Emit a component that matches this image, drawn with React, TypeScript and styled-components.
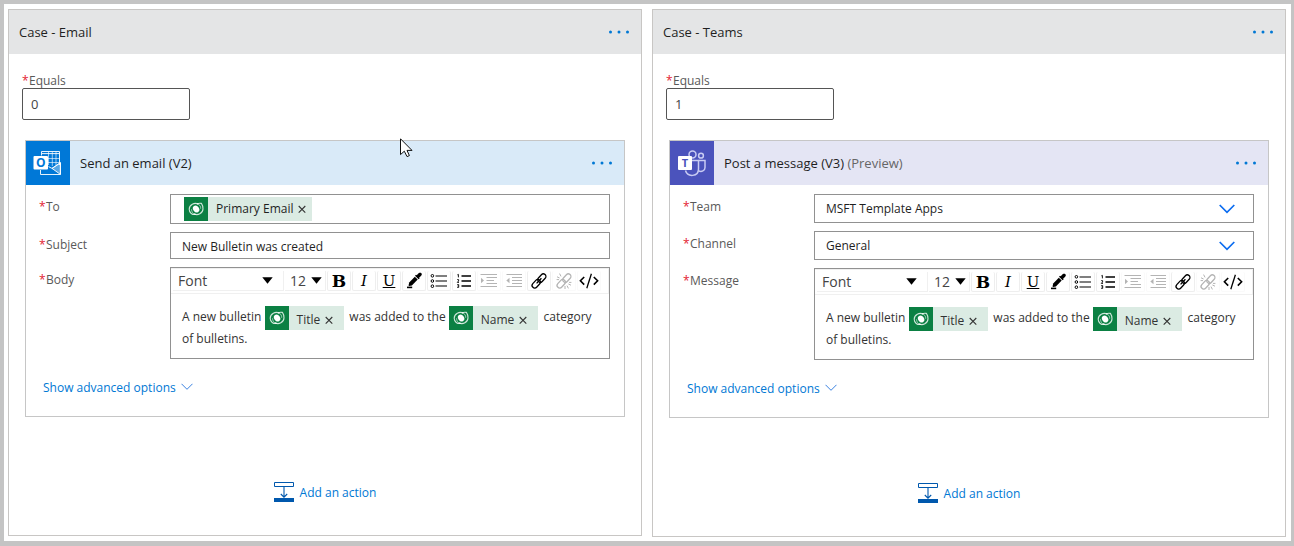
import React from "react";
import styled, { createGlobalStyle } from "styled-components";

const GlobalStyle = createGlobalStyle`
  *, *::before, *::after { box-sizing: border-box; }
  body {
    margin: 0;
    background: #fff;
    color: #1f1f1f;
    font-family: "Segoe UI", "Open Sans", "Noto Sans", sans-serif;
    font-size: 12px;
  }
  button, input, select { font: inherit; color: inherit; margin: 0; }
  svg { display: block; }
`;

const Frame = styled.main`
  position: relative;
  min-height: 100vh;
  border: solid #c4c4c4;
  border-width: 4px 3px 5px 4px;
  padding: 5px 5px 4px 4px;
  display: grid;
  grid-template-columns: 1fr 1fr;
  align-items: start;
  gap: 10px;
`;

const Panel = styled.section`
  border: 1px solid #c8c6c4;
  min-width: 0;
`;

const PanelHeader = styled.header`
  height: 44px;
  padding: 0 11px 0 10px;
  display: flex;
  align-items: center;
  justify-content: space-between;
  background: #e4e5e6;
`;

const Heading = styled.h2`
  margin: 0;
  font-size: 13px;
  font-weight: 400;
  line-height: 20px;
`;

const MoreButton = styled.button`
  border: 0;
  padding: 0;
  background: none;
  cursor: pointer;
`;

const PanelBody = styled.div`
  padding: 18px 16px 33px;
  display: flex;
  flex-direction: column;
`;

const EqualsField = styled.div`
  margin: 0 0 20px -3px;
  display: flex;
  flex-direction: column;
  align-items: flex-start;
`;

const EqualsInput = styled.input`
  width: 168px;
  height: 32px;
  padding: 0 8px;
  border: 1px solid #555;
  border-radius: 2px;
  background: #fff;
  color: #444;
  font-size: 13px;
`;

const Label = styled.label`
  display: flex;
  gap: 2px;
  height: 16px;
  line-height: 18px;
  color: #595959;
`;

const Star = styled.span`
  width: 5px;
  color: #e3202f;
`;

const Card = styled.article`
  border: 1px solid #c6c6c6;
`;

const CardHeader = styled.header<{ $tint: string }>`
  height: 44px;
  padding-right: 11px;
  display: flex;
  align-items: center;
  gap: 10px;
  background: ${(p) => p.$tint};

  ${MoreButton} { margin-left: auto; }
`;

const Preview = styled.span`
  color: #666;
`;

const CardBody = styled.div`
  padding: 9px 14px 19px 13px;
  display: flex;
  flex-direction: column;
  gap: 8px;
`;

const FieldRow = styled.div`
  display: grid;
  grid-template-columns: 131px minmax(0, 1fr);
  align-items: start;

  ${Label} { margin-top: 4px; }
`;

const TokenBox = styled.div`
  height: 30px;
  padding: 0 13px;
  display: flex;
  align-items: center;
  border: 1px solid #919191;
`;

const BareInput = styled.input`
  flex: 1;
  min-width: 0;
  border: 0;
  padding: 0;
  background: none;
`;

const TextInput = styled.input`
  width: 100%;
  height: 27px;
  padding: 2px 11px 0;
  border: 1px solid #919191;
  background: #fff;
`;

const SelectWrap = styled.div`
  position: relative;

  svg {
    position: absolute;
    right: 19px;
    top: 10px;
    pointer-events: none;
  }
`;

const Select = styled.select`
  appearance: none;
  width: 100%;
  height: 29px;
  padding: 0 48px 0 11px;
  border: 1px solid #919191;
  border-radius: 0;
  background: #fff;
`;

const Editor = styled.div`
  height: 92px;
  border: 1px solid #919191;
`;

const Toolbar = styled.div`
  height: 26px;
  padding: 2px 0 2px 2px;
  display: flex;
  gap: 1px;
  border: solid #f0f0f0;
  border-width: 1px 1px 1px 0;
`;

const ToolSelectWrap = styled.div<{ $width: number }>`
  position: relative;
  width: ${(p) => p.$width}px;

  svg {
    position: absolute;
    right: 4px;
    top: 6px;
    pointer-events: none;
  }
`;

const ToolSelect = styled.select`
  appearance: none;
  width: 100%;
  height: 20px;
  padding: 0 5px;
  border: solid #f0f0f0;
  border-width: 0 1px 1px 0;
  border-radius: 0;
  background: #fff;
  color: #444;
  font-size: 14px;
  line-height: 18px;
`;

const ToolButton = styled.button<{ $off?: boolean }>`
  width: 24px;
  height: 20px;
  padding: 0;
  display: grid;
  place-items: center;
  border: solid ${(p) => (p.$off ? "#fafafa" : "#eeeeee")};
  border-width: 0 1px 1px 1px;
  border-radius: 2px;
  background: #fff;
  color: ${(p) => (p.$off ? "#b4b4b4" : "#000")};
`;

const Letter = styled.span<{ $kind: "b" | "i" | "u" }>`
  font-family: "DejaVu Serif", serif;
  font-size: ${(p) => (p.$kind === "b" ? 17 : 15)}px;
  line-height: 18px;
  font-weight: ${(p) => (p.$kind === "b" ? 700 : 400)};
  font-style: ${(p) => (p.$kind === "i" ? "italic" : "normal")};
  text-decoration: ${(p) => (p.$kind === "u" ? "underline" : "none")};
`;

const Content = styled.div`
  padding: 12px 11px;
  line-height: 18px;
  color: #333;
  outline: none;
`;

const TokenShell = styled.span<{ $roomy?: boolean }>`
  display: inline-flex;
  align-items: center;
  height: 24px;
  margin-right: ${(p) => (p.$roomy ? 2 : 0)}px;
  padding-right: ${(p) => (p.$roomy ? 11 : 6)}px;
  background: #dbebe3;
  line-height: 24px;
  vertical-align: middle;
`;

const TokenMark = styled.span`
  width: 24px;
  height: 24px;
  margin-right: 8px;
  background: #0b8043;
`;

const TokenText = styled.span<{ $roomy?: boolean }>`
  display: flex;
  align-items: center;
  gap: 5px;
  padding-top: ${(p) => (p.$roomy ? 3 : 0)}px;
`;

const TokenRemove = styled.button`
  padding: 0;
  border: 0;
  background: none;
`;

const AdvancedButton = styled.button`
  align-self: flex-start;
  height: 20px;
  margin: 10px 0 0 4px;
  padding: 0;
  display: flex;
  align-items: center;
  gap: 5px;
  border: 0;
  background: none;
  color: #0078d4;
`;

const AddButton = styled.button`
  align-self: center;
  height: 20px;
  margin-top: 65px;
  padding: 0;
  display: flex;
  align-items: center;
  gap: 6px;
  border: 0;
  background: none;
  color: #0078d4;
`;

const Pointer = styled.svg`
  position: absolute;
  left: 396px;
  top: 134px;
  pointer-events: none;
`;

const More = () => (
  <MoreButton aria-label="More options">
    <svg width="22" height="6" viewBox="0 0 22 6" fill="#0078d4">
      <circle cx="2.5" cy="3" r="1.5" />
      <circle cx="11" cy="3" r="1.5" />
      <circle cx="19.5" cy="3" r="1.5" />
    </svg>
  </MoreButton>
);

const Required = ({ id, text }: { id: string; text: string }) => (
  <Label htmlFor={id} id={id + "-label"}>
    <Star>*</Star>
    {text}
  </Label>
);

const Token = ({ name, roomy }: { name: string; roomy?: boolean }) => (
  <TokenShell contentEditable={false} $roomy={roomy}>
    <TokenMark>
      <svg width="24" height="24" viewBox="0 0 24 24" fill="none" stroke="#fff">
        <ellipse cx="12.1" cy="12" rx="2.9" ry="3.7" transform="rotate(-35 12.1 12)" fill="#fff" stroke="none" />
        <path d="M14.4 7.2C10.4 4.9 5.2 7.8 5.2 12.2C5.2 15.8 8.4 18.2 11.6 17.4" strokeWidth="1.1" strokeOpacity=".8" />
        <path d="M9.8 16.8C13.8 19.1 19 16.2 19 11.8C19 9.6 18.4 7.8 17.4 6.4C16 6 14.4 6.2 13 6.8" strokeWidth="1.1" strokeOpacity=".8" />
        <path d="M11.6 17.4C8.6 16.8 7.4 14.6 7.6 12.2M13 6.8C15.8 7.4 16.9 9.4 16.7 11.8" strokeWidth=".9" strokeOpacity=".6" />
      </svg>
    </TokenMark>
    <TokenText $roomy={roomy}>
      {name}
      <TokenRemove aria-label={"Remove " + name}>
        <svg width="8" height="8" viewBox="0 0 8 8" stroke="#333" strokeWidth="1.1">
          <path d="M.7 1L7.3 7.6M7.3 1L.7 7.6" />
        </svg>
      </TokenRemove>
    </TokenText>
  </TokenShell>
);

const Chevron = () => (
  <svg width="16" height="10" viewBox="0 0 16 10" fill="none" stroke="#0b6cf0" strokeWidth="1.7">
    <path d="M.7 1L8 8.3L15.3 1" />
  </svg>
);

const Triangle = () => (
  <svg width="11" height="7" viewBox="0 0 11 7">
    <path d="M.3 .3H10.7L5.5 6.8Z" />
  </svg>
);

const MarkerIcon = () => (
  <svg width="18" height="18" viewBox="0 0 18 18">
    <path d="M16.4 1.2C15.3 .2 13.8 .8 12.9 1.9L11.7 3.2L11 2.7L10 3.8L13.6 7.3L14.7 6.2L14.2 5.5L15.7 4.2C16.7 3.3 17.3 2 16.4 1.2Z" />
    <path d="M9.8 4.8L12.7 7.6L6.9 13.4L4.2 14.1L3.5 13.4L4.2 10.4Z" />
    <path d="M2 15.4H7.2" stroke="#000" strokeWidth="1.6" />
  </svg>
);

const BulletsIcon = () => (
  <svg width="18" height="16" viewBox="0 0 18 16" fill="none" stroke="#000">
    <circle cx="2.4" cy="2.8" r="1.3" />
    <circle cx="2.4" cy="8" r="1.3" />
    <circle cx="2.4" cy="13.2" r="1.3" />
    <path d="M5.5 3H17M5.5 8H17M5.5 13H17" strokeWidth="1.1" />
  </svg>
);

const NumbersIcon = () => (
  <svg width="16" height="16" viewBox="0 0 16 16" fill="none" stroke="#000">
    <path d="M1.4 1.8L2.4 1.4V4.4M1.2 6.6H2.6V8L1.3 9.4H3M1.2 11.6H2.7V14.4H1.2M1.5 13H2.6" strokeWidth=".9" />
    <path d="M5.5 3H15M5.5 8H15M5.5 13H15" strokeWidth="1.6" />
  </svg>
);

const IndentIcon = ({ back }: { back?: boolean }) => (
  <svg width="18" height="16" viewBox="0 0 18 16" fill="none" stroke="currentColor">
    <path d={back ? "M1.5 1.5H17M7 4.5H17M7 7.5H17M7 10.5H17M1.5 13.5H17" : "M.5 1.5H17M6.5 4.5H17M6.5 7.5H14M6.5 10.5H17M.5 13.5H17"} />
    <path d={back ? "M4.5 4.8V10.2L1.3 7.5Z" : "M1 4.8V10.2L4 7.5Z"} fill="currentColor" stroke="none" />
  </svg>
);

const LinkIcon = ({ broken }: { broken?: boolean }) => (
  <svg width="18" height="18" viewBox="0 0 18 18" fill="none" stroke="currentColor" strokeWidth="1.3">
    <rect x="7" y="3.5" width="9.6" height="5.2" rx="2.6" transform="rotate(-47 11.8 6.1)" />
    <rect x="1.4" y="9.2" width="9.6" height="5.2" rx="2.6" transform="rotate(-47 6.2 11.8)" />
    {broken ? (
      <path d="M2 4.8L4.6 6M4.6 1.6L6 4.4M1.6 7.6H4M16 13.2L13.4 12M13.4 16.4L12 13.6M16.4 10.4H14M10 14V17" strokeWidth="1" />
    ) : (
      <path d="M6.6 11.4L11.4 6.2" />
    )}
  </svg>
);

const CodeIcon = () => (
  <svg width="20" height="16" viewBox="0 0 20 16" fill="none" stroke="#000" strokeWidth="1.6">
    <path d="M5.2 4L1.4 7.8L5.2 11.6M14.8 4L18.6 7.8L14.8 11.6" />
    <path d="M12.4 .8L7.8 15.2" strokeWidth="1.3" />
  </svg>
);

const OutlookLogo = () => (
  <svg width="44" height="44" viewBox="0 0 44 44" fill="none" stroke="#fff">
    <rect width="44" height="44" fill="#0078d7" stroke="none" />
    <path d="M15.5 14.5V10.5H33.5V24" strokeOpacity=".9" />
    <path d="M16 12.6H33.5" strokeOpacity=".9" />
    <path d="M22 17.5H33.5M22 21.5H33.5M22.5 11V24M26.3 11V25M30 11V24" strokeOpacity=".6" />
    <path d="M14.5 29V33.5H34.5V21.5L26 27.4L22.5 25.6" strokeOpacity=".9" />
    <path d="M26 27.4L34.3 33.3V22Z" fill="#fff" fillOpacity=".35" strokeOpacity=".9" />
    <rect x="7.5" y="15" width="14.5" height="13.5" rx="1" fill="#fff" stroke="none" />
    <text x="14.7" y="26" textAnchor="middle" fontFamily="Open Sans, sans-serif" fontSize="12" fontWeight="700" fill="#0078d7" stroke="none">O</text>
  </svg>
);

const TeamsLogo = () => (
  <svg width="44" height="44" viewBox="0 0 44 44" fill="none" stroke="#c9ccf3" strokeWidth="1.5">
    <rect width="44" height="44" fill="#4b53bc" stroke="none" />
    <circle cx="22.5" cy="13.6" r="3.5" />
    <circle cx="31" cy="14.7" r="2.4" />
    <path d="M22 19.5H28.5V28C28.5 36 17.5 36.5 15.5 29.5" />
    <path d="M28.5 19.5H35V26.5C35 30 31.5 31 28.8 30" />
    <rect x="8" y="15" width="14" height="14" rx="1" fill="#fff" stroke="none" />
    <text x="15" y="26" textAnchor="middle" fontFamily="Open Sans, sans-serif" fontSize="11" fontWeight="700" fill="#4b53bc" stroke="none">T</text>
  </svg>
);

const RichEditor = ({ id }: { id: string }) => (
  <Editor>
    <Toolbar role="toolbar" aria-label="Formatting">
      <ToolSelectWrap $width={111}>
        <ToolSelect aria-label="Font family">
          <option>Font</option>
        </ToolSelect>
        <svg width="18" height="7" viewBox="0 0 18 7">
          <path d="M.3 .3H10.7L5.5 6.8Z" />
        </svg>
      </ToolSelectWrap>
      <ToolSelectWrap $width={41}>
        <ToolSelect aria-label="Font size">
          <option>12</option>
        </ToolSelect>
        <Triangle />
      </ToolSelectWrap>
      <ToolButton aria-label="Bold"><Letter $kind="b">B</Letter></ToolButton>
      <ToolButton aria-label="Italic"><Letter $kind="i">I</Letter></ToolButton>
      <ToolButton aria-label="Underline"><Letter $kind="u">U</Letter></ToolButton>
      <ToolButton aria-label="Text colour"><MarkerIcon /></ToolButton>
      <ToolButton aria-label="Bulleted list"><BulletsIcon /></ToolButton>
      <ToolButton aria-label="Numbered list"><NumbersIcon /></ToolButton>
      <ToolButton $off aria-label="Increase indent"><IndentIcon /></ToolButton>
      <ToolButton $off aria-label="Decrease indent"><IndentIcon back /></ToolButton>
      <ToolButton aria-label="Insert link"><LinkIcon /></ToolButton>
      <ToolButton $off aria-label="Remove link"><LinkIcon broken /></ToolButton>
      <ToolButton $off aria-label="Code view"><CodeIcon /></ToolButton>
    </Toolbar>
    <Content id={id} role="textbox" aria-multiline="true" aria-labelledby={id + "-label"} contentEditable suppressContentEditableWarning>
      <span>A new bulletin</span> <Token roomy name="Title" /> <span>was added to the</span>{" "}
      <Token roomy name="Name" /> <span>category</span> <span>of bulletins.</span>
    </Content>
  </Editor>
);

const Dropdown = ({ id, value }: { id: string; value: string }) => (
  <SelectWrap>
    <Select id={id}>
      <option>{value}</option>
    </Select>
    <Chevron />
  </SelectWrap>
);

type CaseProps = {
  id: string;
  title: string;
  equals: string;
  tint: string;
  logo: React.ReactNode;
  action: React.ReactNode;
  children: React.ReactNode;
};

const CasePanel = ({ id, title, equals, tint, logo, action, children }: CaseProps) => (
  <Panel>
    <PanelHeader>
      <Heading>{title}</Heading>
      <More />
    </PanelHeader>
    <PanelBody>
      <EqualsField>
        <Required id={id + "-equals"} text="Equals" />
        <EqualsInput id={id + "-equals"} defaultValue={equals} />
      </EqualsField>
      <Card>
        <CardHeader $tint={tint}>
          {logo}
          <Heading as="h3">{action}</Heading>
          <More />
        </CardHeader>
        <CardBody>
          {children}
          <AdvancedButton>
            Show advanced options
            <svg width="12" height="8" viewBox="0 0 12 8" fill="none" stroke="#3b82e0">
              <path d="M.5 .8L6 6.3L11.5 .8" />
            </svg>
          </AdvancedButton>
        </CardBody>
      </Card>
      <AddButton>
        <svg width="20" height="20" viewBox="0 0 20 20" fill="none" stroke="#0058ad">
          <path d="M.5 .5H19.5V4.5H.5Z" />
          <path d="M10 5V15M6.8 12L10 15.2L13.2 12" strokeWidth="1.1" />
          <path d="M0 18H20" strokeWidth="4" />
        </svg>
        Add an action
      </AddButton>
    </PanelBody>
  </Panel>
);

export default function App() {
  return (
    <>
      <GlobalStyle />
      <Frame>
        <CasePanel id="email" title="Case - Email" equals="0" tint="#d9eaf8" logo={<OutlookLogo />} action="Send an email (V2)">
          <FieldRow>
            <Required id="to" text="To" />
            <TokenBox>
              <Token name="Primary Email" />
              <BareInput id="to" />
            </TokenBox>
          </FieldRow>
          <FieldRow>
            <Required id="subject" text="Subject" />
            <TextInput id="subject" defaultValue="New Bulletin was created" />
          </FieldRow>
          <FieldRow>
            <Required id="body" text="Body" />
            <RichEditor id="body" />
          </FieldRow>
        </CasePanel>
        <CasePanel
          id="teams"
          title="Case - Teams"
          equals="1"
          tint="#e4e5f4"
          logo={<TeamsLogo />}
          action={<>Post a message (V3) <Preview>(Preview)</Preview></>}
        >
          <FieldRow>
            <Required id="team" text="Team" />
            <Dropdown id="team" value="MSFT Template Apps" />
          </FieldRow>
          <FieldRow>
            <Required id="channel" text="Channel" />
            <Dropdown id="channel" value="General" />
          </FieldRow>
          <FieldRow>
            <Required id="message" text="Message" />
            <RichEditor id="message" />
          </FieldRow>
        </CasePanel>
        <Pointer width="13" height="20" viewBox="0 0 13 20">
          <path d="M.5 .8V16.6L4.3 13.2L7 18.6L9.4 17.6L7 12.4H12Z" fill="#fff" stroke="#111" />
        </Pointer>
      </Frame>
    </>
  );
}
